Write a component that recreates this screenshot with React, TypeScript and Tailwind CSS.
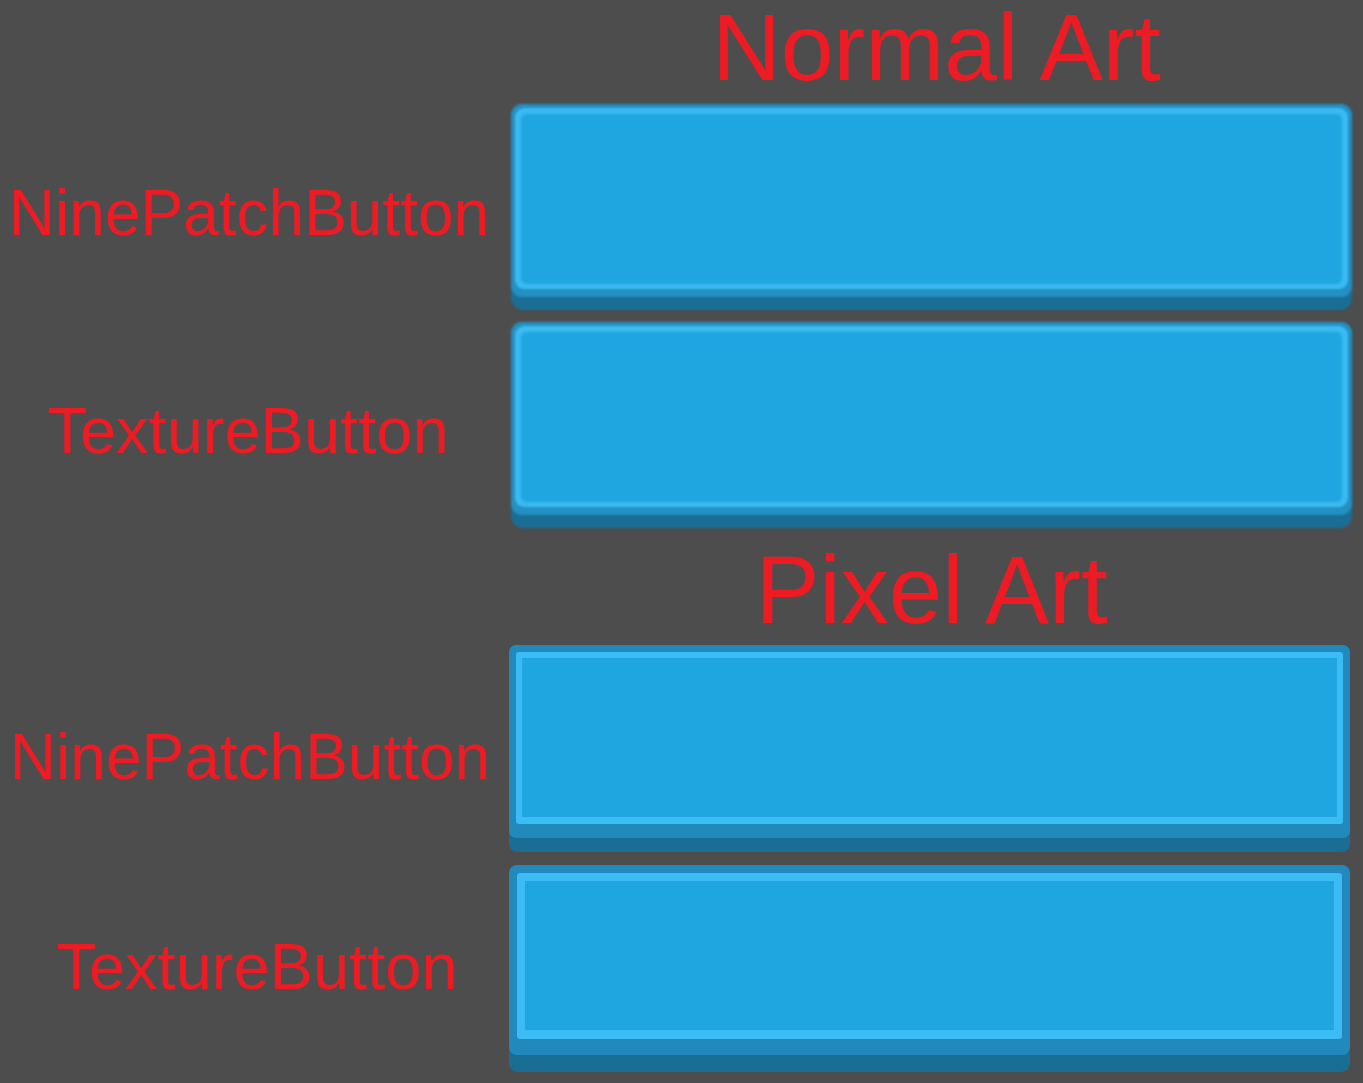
import React from "react";

function NormalButton() {
  return (
    <div className="w-[841px] h-[206px] rounded-[12px] bg-[#1a6e94] pb-[13px] blur-[0.8px]">
      <div className="h-full rounded-[11px] bg-[#2290c2] p-[4px] pb-[8px]">
        <div className="h-full rounded-[9px] bg-[#3bbbf2] p-[7px] pb-[6px]">
          <div className="h-full rounded-[5px] bg-[#1fa5df] shadow-[0_0_2px_1px_#1fa5df]" />
        </div>
      </div>
    </div>
  );
}

function PixelButton({ big }: { big?: boolean }) {
  return (
    <div
      className={
        big
          ? "w-[841px] h-[207px] rounded-[9px] bg-[#1a6e94] pb-[17px]"
          : "w-[841px] h-[207px] rounded-[8px] bg-[#1a6e94] pb-[14px]"
      }
    >
      <div
        className={
          big
            ? "h-full rounded-[8px] bg-[#2189bc] p-[8px] pb-[16px]"
            : "h-full rounded-[7px] bg-[#2189bc] p-[7px] pb-[14px]"
        }
      >
        <div
          className={
            big
              ? "h-full rounded-[3px] bg-[#3bbcf4] p-[8px] pb-[9px]"
              : "h-full rounded-[3px] bg-[#3bbcf4] p-[6px] pb-[7px]"
          }
        >
          <div className="h-full bg-[#1fa5df]" />
        </div>
      </div>
    </div>
  );
}

export default function App() {
  return (
    <div
      className="w-[1363px] h-[1083px] bg-[#4d4d4d] text-[#ed1c24] overflow-hidden"
      style={{ fontFamily: '"Liberation Sans", Arial, sans-serif' }}
    >
      <div className="flex h-[104px]">
        <div className="w-[511px]" />
        <div className="w-[841px] text-center text-[95px] leading-[95px] pl-[10px]">
          Normal Art
        </div>
      </div>

      <div className="flex h-[206px]">
        <div className="w-[498px] text-center text-[64px] leading-[64px] pt-[77px]">
          NinePatchButton
        </div>
        <div className="w-[13px]" />
        <NormalButton />
      </div>

      <div className="flex h-[206px] mt-[12px]">
        <div className="w-[496px] text-center text-[65px] leading-[65px] pt-[76px]">
          TextureButton
        </div>
        <div className="w-[15px]" />
        <NormalButton />
      </div>

      <div className="flex h-[117px] pt-[14px]">
        <div className="w-[511px]" />
        <div className="w-[841px] text-center text-[96px] leading-[96px]">Pixel Art</div>
      </div>

      <div className="flex h-[207px]">
        <div className="w-[500px] text-center text-[64px] leading-[64px] pt-[80px]">
          NinePatchButton
        </div>
        <div className="w-[9px]" />
        <PixelButton />
      </div>

      <div className="flex h-[207px] mt-[13px]">
        <div className="w-[514px] text-center text-[65px] leading-[65px] pt-[69px]">
          TextureButton
        </div>
        <div className="-ml-[5px]">
          <PixelButton big />
        </div>
      </div>
    </div>
  );
}
